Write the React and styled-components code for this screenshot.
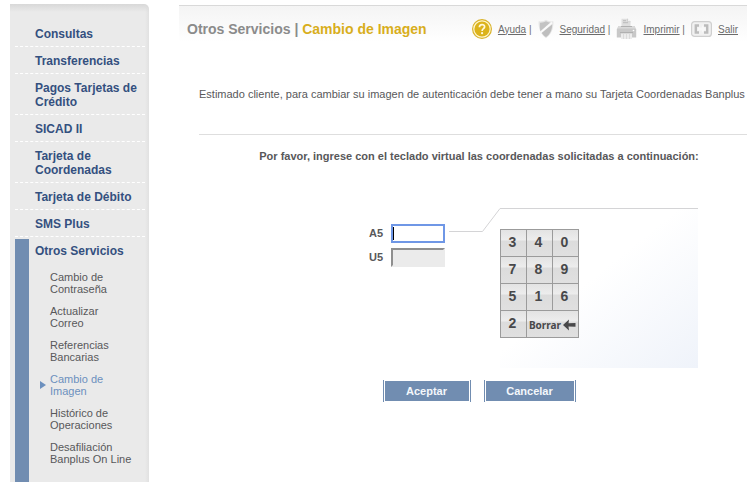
import React, { useState } from 'react'
import styled, { createGlobalStyle } from 'styled-components'

const GlobalStyle = createGlobalStyle`
  * {
    box-sizing: border-box;
  }

  body {
    margin: 0;
    background: #fff;
    color: #58585a;
    font-family: 'Liberation Sans', Arial, sans-serif;
    font-size: 11px;
    overflow-x: hidden;
  }

  a {
    color: inherit;
  }
`

const Page = styled.div`
  display: flex;
  align-items: stretch;
  min-height: 100vh;
  padding: 4px 0 0 10px;
  overflow: hidden;
`

const Sidebar = styled.nav`
  flex: 0 0 139px;
  padding-top: 16px;
  display: flex;
  flex-direction: column;
  border-radius: 0 5px 0 0;
  background:
    linear-gradient(#d8d8d8, rgba(233, 233, 233, 0) 8px),
    linear-gradient(to left, #e1e1e1, #eaeaea 4px);
`

const MenuItem = styled.div`
  margin: 0 4px 0 5px;
  padding: 7px 0 5px 20px;
  border-bottom: 1px dashed #fff;
`

const MenuLink = styled.a`
  display: block;
  font-size: 12px;
  font-weight: bold;
  line-height: 14px;
  color: #34507f;
  text-decoration: none;
`

const OpenSection = styled.div`
  flex: 1;
  margin: 2px 4px 0 5px;
  padding: 5px 11px 16px 6px;
  border-left: 14px solid #718db1;
`

const SubMenu = styled.ul`
  list-style: none;
  margin: 13px 0 0;
  padding: 0;
  display: flex;
  flex-direction: column;
  gap: 10px;
`

const SubItem = styled.li`
  display: grid;
  grid-template-columns: 15px 1fr;
  align-items: center;
  line-height: 12px;
  color: ${props => (props.$active ? '#6c90be' : '#58585a')};

  & a {
    grid-column: 2;
    text-decoration: none;
  }

  & svg {
    display: block;
    margin-left: 5px;
  }
`

const Main = styled.main`
  flex: 1;
  min-width: 0;
  margin: 1px 0 0 30px;
`

const Header = styled.header`
  display: flex;
  justify-content: space-between;
  align-items: center;
  height: 47px;
  padding: 0 9px 0 8px;
  border-top: 1px solid #d9d9d9;
  background: linear-gradient(#f4f4f4, #fff 36px);
`

const Title = styled.h1`
  margin: 0;
  font-size: 14px;
  line-height: 18px;
  color: #8b8b8b;
  white-space: nowrap;
`

const TitleCurrent = styled.span`
  color: #d8ae1c;
`

const Tools = styled.div`
  display: flex;
  align-items: center;
  gap: 6px;
  font-size: 10px;
  color: #6b6b6b;

  & svg {
    display: block;
  }
`

const ToolText = styled.span`
  white-space: pre;
`

const Content = styled.section`
  min-width: 560px;
  margin-left: 20px;
`

const Intro = styled.p`
  margin: 0;
  padding: 36px 0 33px;
  line-height: 13px;
  white-space: nowrap;
  border-bottom: 1px solid #dedede;
`

const Instructions = styled.p`
  margin: 0;
  padding: 15px 0 45px;
  line-height: 13px;
  font-weight: bold;
  text-align: center;
`

const Form = styled.form`
  max-width: 560px;
`

const Workspace = styled.div`
  display: flex;
  align-items: flex-start;
  justify-content: flex-end;
  padding-right: 61px;
`

const Fields = styled.div`
  display: grid;
  grid-template-columns: 22px 54px;
  row-gap: 5px;
  margin: 16px 4px 0 0;
`

const FieldLabel = styled.label`
  font-weight: bold;
  line-height: 18px;
`

const CoordInput = styled.input`
  width: 54px;
  height: 19px;
  padding: 0 2px;
  border: 2px solid;
  border-color: #8f8f8f #ebebeb #ebebeb #8f8f8f;
  border-radius: 0;
  background: #ebebeb;
  font: 11px 'Liberation Sans', Arial, sans-serif;
  outline: none;

  &:focus {
    border-color: #6f97e6;
    background: #fff;
    caret-color: ${props => (props.value ? '#000' : 'transparent')};
    ${props => !props.value && 'background: linear-gradient(#000, #000) 0 50% / 1px 13px no-repeat #fff;'}
  }
`

const Panel = styled.div`
  width: 198px;
  height: 160px;
  padding-top: 20px;
  border-top: 1px solid #d4d4d6;
  background: linear-gradient(to bottom right, #fff 45%, #eff3fa);
`

const Keypad = styled.div`
  display: inline-grid;
  grid-template-columns: repeat(3, 25px);
  grid-auto-rows: 26px;
  gap: 1px;
  padding: 1px;
  background: #9b9b9b;
`

const Key = styled.button`
  display: flex;
  align-items: center;
  justify-content: center;
  gap: 2px;
  grid-column: span ${props => (props.$wide ? 2 : 1)};
  margin: 0;
  padding: ${props => (props.$wide ? '2px 0 0' : '0 2px 2px 0')};
  border: 0;
  background: linear-gradient(#e3e3e3, #ededed 10px, #dcdcdc 11px, #e0e0e0);
  color: #48484a;
  font-family: ${props => (props.$wide ? "'Noto Sans', sans-serif" : "'Liberation Sans', Arial, sans-serif")};
  font-size: ${props => (props.$wide ? 10 : 14)}px;
  font-weight: bold;
  line-height: 16px;
`

const Actions = styled.div`
  display: flex;
  justify-content: center;
  gap: 13px;
  padding: 12px 0;
`

const ActionButton = styled.button`
  min-width: ${props => props.$width}px;
  height: 22px;
  padding: 1px;
  border: 0;
  border-left: 1px solid #718db1;
  border-right: 1px solid #718db1;
  background: #718db1 content-box;
  color: #f4f7fb;
  font: bold 11px 'Liberation Sans', Arial, sans-serif;
`

const HelpIcon = () => (
  <svg width="20" height="22" viewBox="0 0 20 22" aria-hidden="true">
    <circle cx="10" cy="11" r="9.4" fill="#fff6cf" stroke="#d9b32c" strokeWidth="1.2" />
    <circle cx="10" cy="11" r="7.6" fill="#dcb31b" />
    <path d="M7.4 9.2c0-3.6 5.4-3.4 5.2-.3-.1 1.7-2.5 1.9-2.5 4" fill="none" stroke="#fff8dc" strokeWidth="1.7" />
    <circle cx="10.1" cy="15.2" r="1.1" fill="#fff8dc" />
  </svg>
)

const ShieldIcon = () => (
  <svg width="16" height="20" viewBox="0 0 16 20" aria-hidden="true">
    <path d="M8 .8c2 1.4 4.6 1.8 7.4 1.5.3 7-1.7 13-7.4 16.9C2.300 15.300.3 9.300.6 2.300 3.400 2.600 6 2.200 8 .8z" fill="#e6e6e6" />
    <path d="M8 2.300c1.700 1 3.600 1.500 5.900 1.400L2.600 13C1.900 10.500 1.700 7 1.900 3.700 4.300 3.900 6.300 3.300 8 2.300z" fill="#c3c3c3" />
    <path d="M14.200 5.500c-.1 5.200-2 9.700-6.200 12.600-1.800-1.200-3.300-2.600-4.300-4.400z" fill="#bebebe" />
    <path d="M14 3.500L2.500 13.500" stroke="#fafafa" strokeWidth="2" />
  </svg>
)

const PrinterIcon = () => (
  <svg width="21" height="22" viewBox="0 0 21 22" aria-hidden="true">
    <path d="M5.500.7h6l3 3V9h-9z" fill="#dedede" />
    <path d="M11.500.7v3h3" fill="#f4f4f4" stroke="#c9c9c9" strokeWidth=".8" />
    <path d="M7 2.700h3M7 4.700h5" stroke="#bababa" />
    <path d="M2.500 8h16l1.700 3.500v8H.8v-8z" fill="#c8c8c8" />
    <path d="M2.500 8h16l1 2.500H1.500z" fill="#dadada" />
    <path d="M5 8.500h11" stroke="#b0b0b0" />
    <path d="M5 15.500h11V21H5z" fill="#ececec" />
    <path d="M4 14.500h13" stroke="#b0b0b0" />
    <path d="M7.500 16v5M10.500 16v5M13.500 16v5" stroke="#dadada" />
    <circle cx="17.500" cy="12.500" r=".8" fill="#fff" />
  </svg>
)

const ExitIcon = () => (
  <svg width="21" height="16" viewBox="0 0 21 16" aria-hidden="true">
    <rect x=".6" y=".6" width="19.800" height="14.800" rx="3" fill="#f1f1f1" stroke="#cfcfcf" strokeWidth="1.200" />
    <path d="M8 4.500H4.800v7H8M13 4.500h3.200v7H13" fill="none" stroke="#bcbcbc" strokeWidth="2.400" />
    <path d="M7 6.600h4V4.200L15 8l-4 3.800V9.400H7z" fill="#f8f8f8" />
  </svg>
)

const BackArrow = () => (
  <svg width="13" height="12" viewBox="0 0 13 12" aria-hidden="true">
    <path d="M0 6L6 .5 5.500 4.300 12.500 4v3.700L5.500 7.500 6 11.500z" fill="#48484a" />
  </svg>
)

const Connector = () => (
  <svg width="51" height="25" viewBox="0 0 51 25" aria-hidden="true">
    <path d="M0 23.500H33.500L51 .5" fill="none" stroke="#d4d4d6" />
  </svg>
)

const menu = [
  'Consultas',
  'Transferencias',
  'Pagos Tarjetas de Crédito',
  'SICAD II',
  'Tarjeta de Coordenadas',
  'Tarjeta de Débito',
  'SMS Plus'
]

const services = [
  'Cambio de Contraseña',
  'Actualizar Correo',
  'Referencias Bancarias',
  'Cambio de Imagen',
  'Histórico de Operaciones',
  'Desafiliación Banplus On Line'
]

const tools = [
  { label: 'Ayuda', Icon: HelpIcon },
  { label: 'Seguridad', Icon: ShieldIcon },
  { label: 'Imprimir', Icon: PrinterIcon },
  { label: 'Salir', Icon: ExitIcon }
]

const digits = ['3', '4', '0', '7', '8', '9', '5', '1', '6', '2']

export default function App() {
  const [values, setValues] = useState({ a5: '', u5: '' })
  const [current, setCurrent] = useState('a5')

  const update = (field, value) => setValues({ ...values, [field]: value })
  const keepFocus = e => e.preventDefault()

  return (
    <>
      <GlobalStyle />
      <Page>
        <Sidebar>
          {menu.map(item => (
            <MenuItem key={item}>
              <MenuLink href="#">{item}</MenuLink>
            </MenuItem>
          ))}
          <OpenSection>
            <MenuLink href="#">Otros Servicios</MenuLink>
            <SubMenu>
              {services.map(item => {
                const active = item === 'Cambio de Imagen'
                return (
                  <SubItem key={item} $active={active}>
                    {active && (
                      <svg width="6" height="8" viewBox="0 0 6 8" aria-hidden="true">
                        <path d="M0 0l6 4-6 4z" fill="#6c90be" />
                      </svg>
                    )}
                    <a href="#">{item}</a>
                  </SubItem>
                )
              })}
            </SubMenu>
          </OpenSection>
        </Sidebar>

        <Main>
          <Header>
            <Title>
              Otros Servicios | <TitleCurrent>Cambio de Imagen</TitleCurrent>
            </Title>
            <Tools>
              {tools.map(({ label, Icon }, i) => (
                <React.Fragment key={label}>
                  <Icon />
                  <ToolText>
                    <a href="#">{label}</a>
                    {i < tools.length - 1 && ' |'}
                  </ToolText>
                </React.Fragment>
              ))}
            </Tools>
          </Header>

          <Content>
            <Intro>
              Estimado cliente, para cambiar su imagen de autenticación debe tener a mano su Tarjeta Coordenadas Banplus
            </Intro>
            <Form onSubmit={e => e.preventDefault()}>
              <Instructions>
                Por favor, ingrese con el teclado virtual las coordenadas solicitadas a continuación:
              </Instructions>
              <Workspace>
                <Fields>
                  <FieldLabel htmlFor="a5">A5</FieldLabel>
                  <CoordInput
                    id="a5"
                    autoFocus
                    value={values.a5}
                    onFocus={() => setCurrent('a5')}
                    onChange={e => update('a5', e.target.value)}
                  />
                  <FieldLabel htmlFor="u5">U5</FieldLabel>
                  <CoordInput
                    id="u5"
                    value={values.u5}
                    onFocus={() => setCurrent('u5')}
                    onChange={e => update('u5', e.target.value)}
                  />
                </Fields>
                <Connector />
                <Panel>
                  <Keypad onMouseDown={keepFocus}>
                    {digits.map(digit => (
                      <Key key={digit} type="button" onClick={() => update(current, values[current] + digit)}>
                        {digit}
                      </Key>
                    ))}
                    <Key type="button" $wide onClick={() => update(current, '')}>
                      Borrar
                      <BackArrow />
                    </Key>
                  </Keypad>
                </Panel>
              </Workspace>
              <Actions>
                <ActionButton type="submit" $width={88}>Aceptar</ActionButton>
                <ActionButton type="button" $width={92}>Cancelar</ActionButton>
              </Actions>
            </Form>
          </Content>
        </Main>
      </Page>
    </>
  )
}
